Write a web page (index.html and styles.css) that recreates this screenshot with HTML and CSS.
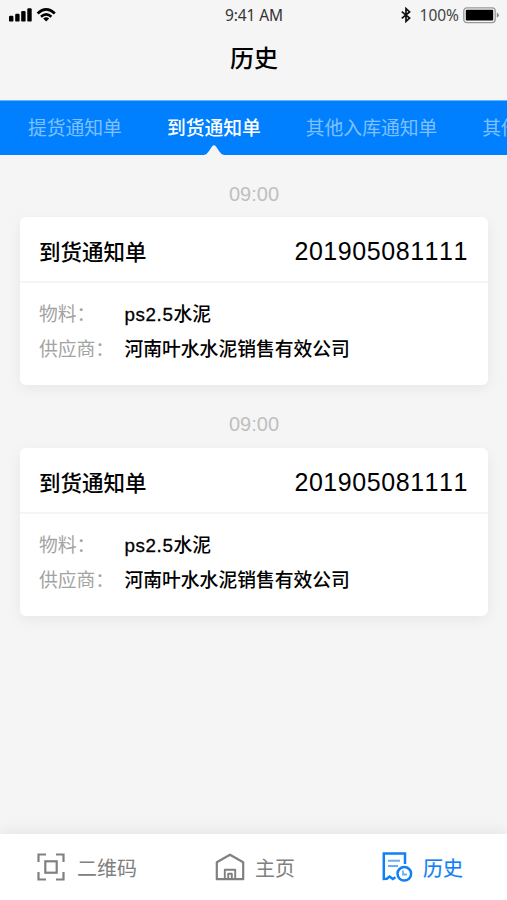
FILE: index.html
```html
<!DOCTYPE html>
<html lang="zh-CN">
<head>
<meta charset="utf-8">
<title>历史</title>
<link rel="stylesheet" href="styles.css">
</head>
<body>
<div class="app">
  <header class="status">
    <div class="status-left">
      <svg width="50" height="16" viewBox="0 0 50 16">
        <rect x="1" y="9.8" width="4.4" height="5.8" rx="1.2"/>
        <rect x="7.2" y="7.8" width="4.4" height="7.8" rx="1.2"/>
        <rect x="13.2" y="5" width="4.4" height="10.600" rx="1.2"/>
        <rect x="19.300" y="2.300" width="4.400" height="13.300" rx="1.2"/>
        <g fill="none" stroke="#000" stroke-width="2.700">
          <path d="M29.600 7.400Q38.200-.7 46.800 7.400"/>
          <path d="M33 10.700Q38.200 6.200 43.400 10.700"/>
        </g>
        <path d="M35.200 12.500Q38.200 10.200 41.200 12.500L38.200 15.600Z"/>
      </svg>
    </div>
    <div class="status-time">9:41 AM</div>
    <div class="status-right">
      <svg class="bluetooth" width="12" height="16" viewBox="0 0 12 16"><path d="M1.800 4.600 9.600 11 6 14.400V1.600L9.600 5 1.800 11.400" fill="none" stroke="#111" stroke-width="1.700"/></svg>
      <span class="percent">100%</span>
      <svg width="37" height="17" viewBox="0 0 37 17"><rect x=".8" y=".8" width="31.400" height="14.800" rx="3" fill="none" stroke="#999" stroke-width="1.300"/><rect x="2.800" y="2.800" width="27.400" height="10.800" rx="1"/><path d="M33.800 5.600Q38 8.200 33.800 10.800Z" fill="#888"/></svg>
    </div>
  </header>
  <h1 class="title">历史</h1>
  <nav class="tabs">
    <span class="tab">提货通知单</span>
    <span class="tab active">到货通知单<svg class="pointer" width="20" height="10" viewBox="0 0 20 10"><path d="M0 10Q3 9.500 5 6L8 1.500Q10-.8 12 1.500L15 6Q17 9.500 20 10Z" fill="#f5f5f5"/></svg></span>
    <span class="tab">其他入库通知单</span>
    <span class="tab">其他出库通知单</span>
  </nav>
  <main class="list">
    <time class="time">09:00</time>
    <article class="card">
      <div class="card-head"><h2>到货通知单</h2><span class="number">201905081111</span></div>
      <dl class="details">
        <dt>物料：</dt><dd><span class="latin">ps2.5</span>水泥</dd>
        <dt>供应商：</dt><dd>河南叶水水泥销售有效公司</dd>
      </dl>
    </article>
    <time class="time">09:00</time>
    <article class="card">
      <div class="card-head"><h2>到货通知单</h2><span class="number">201905081111</span></div>
      <dl class="details">
        <dt>物料：</dt><dd><span class="latin">ps2.5</span>水泥</dd>
        <dt>供应商：</dt><dd>河南叶水水泥销售有效公司</dd>
      </dl>
    </article>
  </main>
  <footer class="bar">
    <a class="item code"><svg width="28" height="28" viewBox="0 0 28 28" fill="none" stroke="#808080" stroke-width="2.200"><path d="M1.500 9V1.500H9M19 1.500H26.500V9M26.500 19V26.500H19M9 26.500H1.500V19"/><rect x="8.300" y="8.300" width="11.400" height="11.400"/></svg><span>二维码</span></a>
    <a class="item home"><svg width="30" height="28" viewBox="0 0 30 28" fill="none" stroke="#808080" stroke-width="2.200" stroke-linejoin="round"><path d="M1.800 9.200 15 1.700 28.200 9.200V26.200H1.800Z"/><path d="M9.800 26V16.800H20.200V26M13.200 26V20.800H16.800V26" stroke-width="1.900"/></svg><span>主页</span></a>
    <a class="item history"><svg width="31" height="30" viewBox="0 0 31 30" fill="none" stroke="#1280f5" stroke-width="2.500"><path d="M13.500 25.300 10.800 27 7.600 24.500 4.800 26.800 1.800 27V1.600H23V12"/><path d="M6 8.700H18M6 14H16" stroke="#6aaef8" stroke-width="1.900"/><circle cx="22.300" cy="21.800" r="6.800"/><path d="M21 18.500V22.500H25" stroke="#6aaef8" stroke-width="1.800"/></svg><span>历史</span></a>
  </footer>
</div>
</body>
</html>
```
FILE: styles.css
```css
* { box-sizing: border-box; }
body {
  margin: 0;
  background: #f5f5f5;
  color: #000;
  font-family: "Liberation Sans", "Noto Sans CJK SC", sans-serif;
}
.app { display: flex; flex-direction: column; height: 900px; overflow: hidden; }
svg { display: block; flex: none; }
.status {
  display: grid;
  grid-template-columns: 1fr auto 1fr;
  align-items: center;
  height: 30px;
  padding: 0 7px 0 8px;
  font-family: "Noto Sans", sans-serif;
  font-size: 15.5px;
  color: #333;
}
.status-left { padding-bottom: 2px; }
.status-time { letter-spacing: -0.1px; }
.status-right { display: flex; justify-content: flex-end; align-items: center; }
.bluetooth { margin-right: 8px; }
.percent { margin-right: 4px; color: #444; }
.title {
  margin: 0;
  height: 70px;
  padding-left: 1px;
  line-height: 58px;
  font-size: 24px;
  font-weight: 500;
  text-align: center;
}
.tabs {
  display: flex;
  flex: none;
  gap: 45px;
  height: 55px;
  padding-left: 28px;
  border-top: 1px solid #63b4fc;
  background: #0080ff;
  color: #80c0ff;
  font-size: 18.8px;
  line-height: 56px;
  white-space: nowrap;
}
.tab { position: relative; flex: none; height: 54px; }
.active { color: #fff; font-weight: 500; }
.pointer { position: absolute; left: 37px; bottom: 0; }
.list { flex: 1; padding: 0 19px 0 20px; }
.time {
  display: block;
  height: 62px;
  padding-top: 16px;
  line-height: 46px;
  font-size: 20px;
  text-align: center;
  color: #bfbfbf;
}
.card {
  height: 168px;
  border-radius: 6px;
  background: #fff;
  box-shadow: 0 4px 14px rgba(0, 0, 0, 0.06);
}
.card + .time { height: 63px; }
.card-head {
  display: flex;
  justify-content: space-between;
  align-items: center;
  height: 66px;
  padding: 2px 20px 0 19px;
  border-bottom: 2px solid #f5f5f5;
}
.card-head h2 { margin: 0; font-size: 21.5px; font-weight: 500; }
.number { padding-top: 2px; font-size: 25px; letter-spacing: 0.56px; font-kerning: none; }
.details {
  display: grid;
  grid-template-columns: 85px 1fr;
  grid-auto-rows: 35px;
  margin: 0;
  padding: 14px 19px;
  font-size: 18.8px;
  line-height: 35px;
}
dt { color: #a3a3a3; white-space: nowrap; }
dd { margin: 0; padding-left: 0.5px; font-weight: 500; white-space: nowrap; }
.latin { letter-spacing: 0.6px; -webkit-text-stroke: 0.3px #000; }
.bar {
  display: flex;
  flex: none;
  height: 66px;
  background: #fff;
  box-shadow: 0 -3px 16px rgba(0, 0, 0, 0.07);
}
.item {
  display: flex;
  flex: 0 0 169px;
  align-items: center;
  font-size: 20px;
  color: #808080;
}
.code { padding-left: 37px; gap: 12px; }
.home { padding-left: 46px; gap: 10px; }
.history { padding-left: 44px; gap: 10px; color: #1280f5; -webkit-text-stroke: 0.2px #1280f5; }
```
